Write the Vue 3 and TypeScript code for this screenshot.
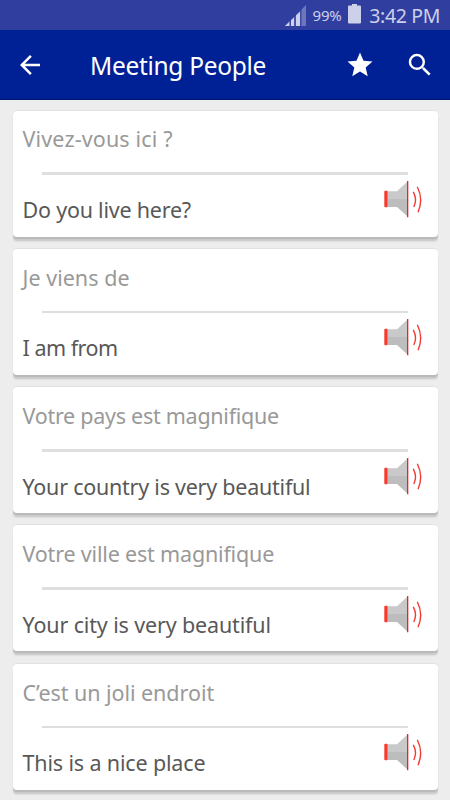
<script setup lang="ts">
interface Phrase {
  source: string
  target: string
  sourceSpacing: number
  targetSpacing: number
}

const phrases: Phrase[] = [
  { source: 'Vivez-vous ici ?', target: 'Do you live here?', sourceSpacing: 0.15, targetSpacing: -0.22 },
  { source: 'Je viens de', target: 'I am from', sourceSpacing: 0.03, targetSpacing: -0.5 },
  { source: 'Votre pays est magnifique', target: 'Your country is very beautiful', sourceSpacing: -0.27, targetSpacing: -0.24 },
  { source: 'Votre ville est magnifique', target: 'Your city is very beautiful', sourceSpacing: -0.18, targetSpacing: -0.14 },
  { source: 'C’est un joli endroit', target: 'This is a nice place', sourceSpacing: -0.05, targetSpacing: -0.15 },
]
</script>

<template>
  <div class="screen">
    <header class="status">
      <svg class="signal" width="22" height="22" viewBox="0 0 22 22">
        <path d="M0 21 L21 0 V21 Z" fill="#6d76bb" />
        <path d="M0 21 L4.7 16.5 V21 Z M6 21 V15.3 L9 12.4 V21 Z M11 21 V10.5 L15 6.7 V21 Z" fill="#cdd0ea" />
        <path d="M5.2 0V22M10 0V22M15.8 0V22" stroke="#303f9f" stroke-width="1.2" />
      </svg>
      <span class="percent">99%</span>
      <svg class="battery" width="13" height="20" viewBox="0 0 13 20">
        <path d="M4 0H9V1.5H12Q13 1.5 13 2.5V18.5Q13 19.5 12 19.5H1Q0 19.5 0 18.5V2.5Q0 1.5 1 1.5H4Z" fill="#cdd0ea" />
      </svg>
      <span class="clock">3:42 PM</span>
    </header>
    <nav class="toolbar">
      <svg class="icon" viewBox="0 0 24 24"><path d="M20 11H7.83l5.59-5.59L12 4l-8 8 8 8 1.41-1.41L7.83 13H20v-2z" /></svg>
      <h1 class="title">Meeting People</h1>
      <svg class="icon star" viewBox="0 0 24 24"><path d="M12 17.27 18.18 21l-1.64-7.03L22 9.24l-7.19-.61L12 2 9.19 8.63 2 9.24l5.46 4.73L5.82 21z" /></svg>
      <svg class="icon" viewBox="0 0 24 24"><path d="M15.5 14h-.79l-.28-.27A6.47 6.47 0 0 0 16 9.5 6.5 6.5 0 1 0 9.5 16c1.61 0 3.09-.59 4.23-1.57l.27.28v.79l5 4.99L20.49 19l-4.99-5zm-6 0C7.01 14 5 11.99 5 9.5S7.01 5 9.5 5 14 7.01 14 9.5 11.99 14 9.5 14z" /></svg>
    </nav>
    <main class="list">
      <article v-for="phrase in phrases" :key="phrase.source" class="card">
        <p class="source"><span :style="{ letterSpacing: phrase.sourceSpacing + 'px' }">{{ phrase.source }}</span></p>
        <hr class="divider" />
        <div class="answer">
          <p class="target"><span :style="{ letterSpacing: phrase.targetSpacing + 'px' }">{{ phrase.target }}</span></p>
          <svg class="speaker" width="40" height="40" viewBox="0 0 40 40">
            <path d="M4 12.3H13L23.5 2.5V20H4Z" fill="#c9c9c9" />
            <path d="M4 20H23.5V37.5L13 28H4Z" fill="#bdbdbd" />
            <rect x="0.3" y="11.7" width="3.4" height="16.6" rx="1" fill="#f83a2c" />
            <path d="M23.7 2V38.3" stroke="#e01212" stroke-width="1.2" />
            <path d="M29.5 13.3Q33.3 20.3 30 27.5M33.5 8.3Q39.5 20 34.2 32.7" fill="none" stroke="#f23a32" stroke-width="1.4" stroke-linecap="round" />
          </svg>
        </div>
      </article>
    </main>
  </div>
</template>

<style>
body {
  margin: 0;
  overflow: hidden;
}
</style>

<style scoped>
.screen {
  width: 450px;
  height: 800px;
  overflow: hidden;
  background: #ededed;
  font-family: "Noto Sans", sans-serif;
}
.status {
  box-sizing: border-box;
  height: 30px;
  padding: 0 10px 0 285px;
  display: flex;
  align-items: center;
  background: #303f9f;
  color: #cdd0ea;
  white-space: nowrap;
}
.signal {
  flex: none;
  margin-top: 1px;
}
.percent {
  width: 34px;
  margin-left: 5.5px;
  font-size: 15px;
  letter-spacing: -0.2px;
}
.battery {
  flex: none;
  margin-top: -2px;
  margin-left: 2px;
}
.clock {
  margin-left: 8.5px;
  font-size: 19.5px;
  letter-spacing: -0.35px;
}
.toolbar {
  box-sizing: border-box;
  height: 70px;
  padding: 0 15px;
  display: flex;
  align-items: center;
  background: #002196;
  border-bottom: 1px solid #001470;
  color: #fff;
}
.icon {
  flex: none;
  width: 30px;
  height: 30px;
  fill: #fff;
}
.title {
  flex: 1;
  margin: 0 0 0 45px;
  padding-top: 2px;
  font-size: 24.5px;
  line-height: 34px;
  font-weight: 400;
  letter-spacing: -0.3px;
  white-space: nowrap;
}
.star {
  margin-right: 30px;
}
.list {
  padding: 10.5px 12px 0 12.5px;
  display: flex;
  flex-direction: column;
  gap: 12.3px;
}
.card {
  box-sizing: border-box;
  flex: none;
  height: 126px;
  padding: 13.9px 13px 0 10px;
  border-radius: 4px;
  background: #fff;
  box-shadow: 0 -1px 1px rgba(0, 0, 0, 0.05), 0 2px 0 rgba(0, 0, 0, 0.08), 0 4px 1px rgba(0, 0, 0, 0.09), 0 5px 2px rgba(0, 0, 0, 0.06);
}
.source,
.target {
  margin: 0;
  font-size: 21.5px;
  line-height: 30px;
  white-space: nowrap;
}
.source {
  color: #999;
}
.target {
  padding-top: 20px;
  color: #585858;
}
.divider {
  height: 2.5px;
  margin: 18.1px 17px 0 19.5px;
  border: 0;
  background: #dedede;
}
.answer {
  display: flex;
  justify-content: space-between;
}
.speaker {
  flex: none;
  margin-top: 4px;
  margin-right: 1px;
}
</style>
